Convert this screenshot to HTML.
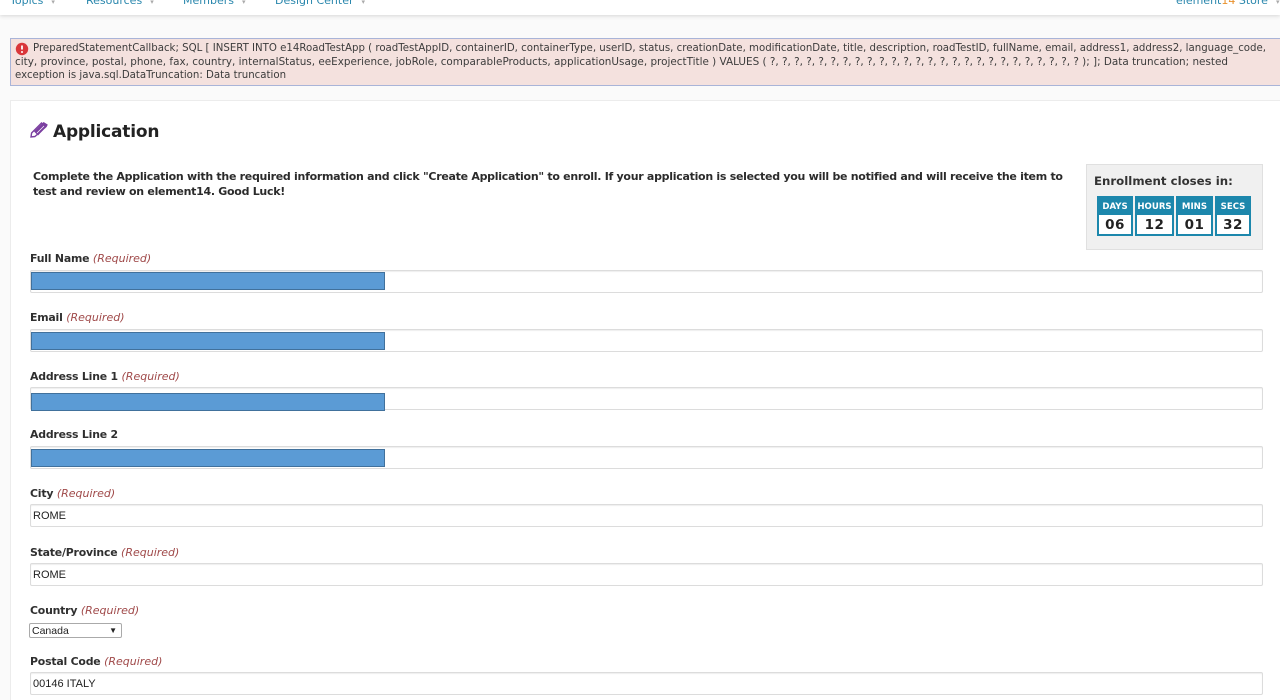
<!DOCTYPE html>
<html>
<head>
<meta charset="utf-8">
<style>
html,body{margin:0;padding:0;width:1280px;height:700px;overflow:hidden;background:#fafafa;font-family:"DejaVu Sans","Liberation Sans",sans-serif;color:#2b2b2b}
.a{position:absolute;white-space:nowrap}
#top{left:0;top:0;width:1280px;height:15px;background:#fff;box-shadow:0 1px 4px rgba(0,0,0,.15)}
.nav{font-size:11px;color:#2a87ad;line-height:14px}
.nav i{font-style:normal;color:#aaa;font-size:7px;margin-left:8px}
#err{left:10px;top:38px;width:1270px;height:48px;box-sizing:border-box;background:#f4e1de;border:1px solid #a9b4d8;border-right:0}
.e{font-size:10.2px;line-height:12px;color:#3c3c3c;left:15px}
#card{left:10px;top:100px;width:1270px;height:600px;box-sizing:border-box;background:#fff;border:1px solid #ececec;border-right:0;border-bottom:0}
h1{margin:0;font-size:17px;letter-spacing:-.2px;font-weight:bold;left:53px;top:121px;line-height:22px;color:#222}
.p{font-size:11px;letter-spacing:-.285px;font-weight:bold;left:33px;line-height:16px;color:#2b2b2b}
.l{font-size:10.9px;letter-spacing:-.2px;font-weight:bold;left:30px;line-height:14px;color:#2f2f2f}
.l em{font-weight:normal;color:#a04a4a;letter-spacing:0;font-size:11px}
.in{left:30px;width:1233px;height:23px;box-sizing:border-box;background:#fff;border:1px solid #dcdcdc;border-radius:2px;box-shadow:inset 0 1px 1px #eee;font:11px/23px "Liberation Sans",sans-serif;color:#222;padding-left:2px}
.b{left:31px;width:354px;height:18px;background:#5b9bd5;box-sizing:border-box;border:1px solid #41719c}
#box{left:1086px;top:164px;width:177px;height:86px;box-sizing:border-box;background:#f0f0f0;border:1px solid #e0e0e0}
.t{top:196px;height:40px;box-sizing:border-box;background:#fff;border:2px solid #1c87ac;border-top:0;text-align:center}
.t b{display:block;margin:0 -2px;height:19px;background:#1c87ac;color:#fff;font-size:8.6px;line-height:22px}
.t span{display:block;font:bold 13.5px/20px "DejaVu Sans",sans-serif;color:#222;letter-spacing:.5px}
#sel{left:29px;top:623px;width:93px;height:15px;box-sizing:border-box;background:#fff;border:1px solid #aaa;border-radius:2px;font:10.5px/14px "Liberation Sans",sans-serif;color:#222;padding-left:2px}
</style>
</head>
<body>
<div class="a" id="top"></div>
<div class="a nav" style="left:10px;top:-6px">Topics<i>▾</i></div>
<div class="a nav" style="left:86px;top:-6px">Resources<i>▾</i></div>
<div class="a nav" style="left:183px;top:-6px">Members<i>▾</i></div>
<div class="a nav" style="left:275px;top:-6px">Design Center<i>▾</i></div>
<div class="a nav" style="left:1176px;top:-6px">element<span style="color:#e8912d">14</span> Store<i>▾</i></div>

<div class="a" id="err"></div>
<svg class="a" style="left:15px;top:42px" width="14" height="14" viewBox="0 0 14 14"><circle cx="7" cy="7" r="6.2" fill="#d9363a"/><path d="M7 3.5v4" stroke="#fff" stroke-width="1.8"/><circle cx="7" cy="10" r="1" fill="#fff"/></svg>
<div class="a e" style="left:33px;top:43px">PreparedStatementCallback; SQL [ INSERT INTO e14RoadTestApp ( roadTestAppID, containerID, containerType, userID, status, creationDate, modificationDate, title, description, roadTestID, fullName, email, address1, address2, language_code,</div>
<div class="a e" style="top:56px;font-size:10.41px">city, province, postal, phone, fax, country, internalStatus, eeExperience, jobRole, comparableProducts, applicationUsage, projectTitle ) VALUES ( ?, ?, ?, ?, ?, ?, ?, ?, ?, ?, ?, ?, ?, ?, ?, ?, ?, ?, ?, ?, ?, ?, ?, ?, ?, ? ); ]; Data truncation; nested</div>
<div class="a e" style="top:70px">exception is java.sql.DataTruncation: Data truncation</div>

<div class="a" id="card"></div>
<svg class="a" style="left:30px;top:121px" width="19" height="17" viewBox="0 0 19 17"><path d="M5 15.5L1 16l.6-4L11.5 2l4 4z" fill="#fff" stroke="#7b3fa0" stroke-width="1.4"/><path d="M4 10.5L12 2.5l1.6-1.5 4.2 2.6-1 2L8 14.5z" fill="#7b3fa0"/><path d="M7 12L14 5M10 13l5-5" stroke="#fff" stroke-width=".7"/></svg>
<h1 class="a">Application</h1>
<div class="a p" style="top:169px">Complete the Application with the required information and click "Create Application" to enroll. If your application is selected you will be notified and will receive the item to</div>
<div class="a p" style="top:184px">test and review on element14. Good Luck!</div>

<div class="a" id="box"></div>
<div class="a" style="left:1094px;top:174px;font-size:11.75px;font-weight:bold;line-height:15px;color:#333">Enrollment closes in:</div>
<div class="a t" style="left:1097px;width:36px"><b>DAYS</b><span>06</span></div>
<div class="a t" style="left:1135px;width:39px"><b>HOURS</b><span>12</span></div>
<div class="a t" style="left:1176px;width:37px"><b>MINS</b><span>01</span></div>
<div class="a t" style="left:1215px;width:36px"><b>SECS</b><span>32</span></div>

<div class="a l" style="top:252px">Full Name <em>(Required)</em></div>
<div class="a in" style="top:270px"></div><div class="a b" style="top:272px"></div>
<div class="a l" style="top:311px">Email <em>(Required)</em></div>
<div class="a in" style="top:329px"></div><div class="a b" style="top:332px"></div>
<div class="a l" style="top:370px">Address Line 1 <em>(Required)</em></div>
<div class="a in" style="top:387px"></div><div class="a b" style="top:393px"></div>
<div class="a l" style="top:428px">Address Line 2</div>
<div class="a in" style="top:446px"></div><div class="a b" style="top:449px"></div>
<div class="a l" style="top:487px">City <em>(Required)</em></div>
<div class="a in" style="top:504px">ROME</div>
<div class="a l" style="top:546px">State/Province <em>(Required)</em></div>
<div class="a in" style="top:563px">ROME</div>
<div class="a l" style="top:604px">Country <em>(Required)</em></div>
<div class="a" id="sel">Canada<span style="position:absolute;right:4px;top:0;font-size:8px">▼</span></div>
<div class="a l" style="top:655px">Postal Code <em>(Required)</em></div>
<div class="a in" style="top:672px">00146 ITALY</div>
</body>
</html>
